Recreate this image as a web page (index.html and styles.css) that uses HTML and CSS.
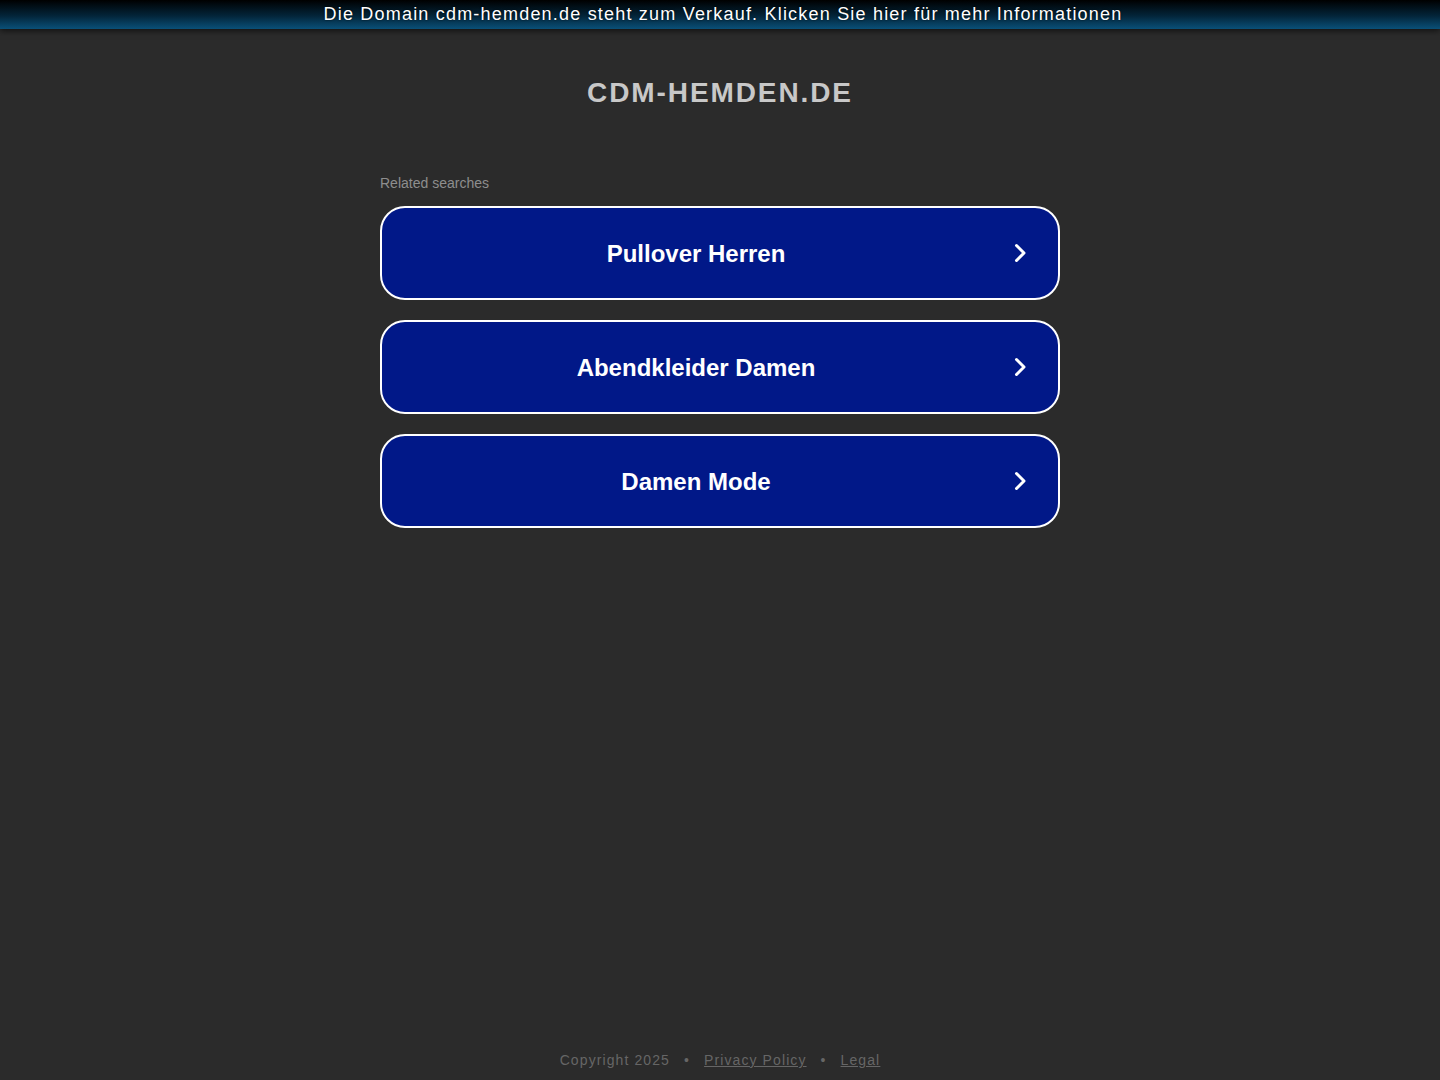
FILE: index.html
```html
<!DOCTYPE html>
<html lang="de">
<head>
<meta charset="utf-8">
<title>cdm-hemden.de</title>
<link rel="stylesheet" href="styles.css">
</head>
<body>
<div class="page">
  <header class="topbar"><a class="topbar-link" href="#">Die Domain cdm-hemden.de steht zum Verkauf. Klicken Sie hier für mehr Informationen</a></header>
  <main class="main">
    <h1 class="title">CDM-HEMDEN.DE</h1>
    <section class="related">
      <div class="related-label">Related searches</div>
      <a class="search-btn" href="#"><span class="search-text">Pullover Herren</span><svg class="chev" viewBox="0 0 24 24" width="24" height="24"><path d="M8.5 4.5 L16 12 L8.5 19.5" fill="none" stroke="#fff" stroke-width="3" stroke-linecap="round" stroke-linejoin="round"/></svg></a>
      <a class="search-btn" href="#"><span class="search-text">Abendkleider Damen</span><svg class="chev" viewBox="0 0 24 24" width="24" height="24"><path d="M8.5 4.5 L16 12 L8.5 19.5" fill="none" stroke="#fff" stroke-width="3" stroke-linecap="round" stroke-linejoin="round"/></svg></a>
      <a class="search-btn" href="#"><span class="search-text">Damen Mode</span><svg class="chev" viewBox="0 0 24 24" width="24" height="24"><path d="M8.5 4.5 L16 12 L8.5 19.5" fill="none" stroke="#fff" stroke-width="3" stroke-linecap="round" stroke-linejoin="round"/></svg></a>
    </section>
  </main>
  <footer class="footer">
    <span>Copyright 2025</span><span class="dot">•</span><a href="#">Privacy Policy</a><span class="dot">•</span><a href="#">Legal</a>
  </footer>
</div>
</body>
</html>
```

FILE: styles.css
```css
html, body {
  margin: 0;
  padding: 0;
  height: 100%;
}
body {
  background: #2b2b2b;
  font-family: "Liberation Sans", Arial, sans-serif;
}
.page {
  min-height: 100vh;
  display: flex;
  flex-direction: column;
}
.topbar {
  height: 29px;
  background: linear-gradient(to bottom, #000000 0%, #03253a 55%, #0a5078 100%);
  box-shadow: 0 2px 6px rgba(0,0,0,0.6);
  display: flex;
  justify-content: center;
  align-items: center;
  position: relative;
  z-index: 1;
}
.topbar-link {
  color: #ffffff;
  text-decoration: none;
  font-size: 18px;
  letter-spacing: 1.2px;
  line-height: 29px;
  margin-left: 6px;
  text-shadow: 0 0 2px rgba(0,0,0,0.8);
}
.main {
  flex: 1;
  display: flex;
  flex-direction: column;
  align-items: center;
}
.title {
  margin: 46px 0 0 0;
  font-size: 28px;
  line-height: 36px;
  font-weight: bold;
  color: #c8c8c8;
  letter-spacing: 1.9px;
}
.related {
  width: 680px;
  margin-top: 64px;
  display: flex;
  flex-direction: column;
  gap: 20px;
}
.related-label {
  font-size: 14px;
  color: #8e8e8e;
  line-height: 18px;
  margin-bottom: -6px;
  margin-top: -1px;
}
.search-btn {
  box-sizing: border-box;
  height: 94px;
  border: 2px solid #ffffff;
  border-radius: 25px;
  background: #011888;
  display: flex;
  align-items: center;
  text-decoration: none;
  padding: 0 26px 0 0;
}
.search-text {
  flex: 1;
  text-align: center;
  color: #ffffff;
  font-size: 24px;
  font-weight: bold;
  padding-left: 2px;
  padding-top: 2px;
}
.chev {
  flex: none;
}
.footer {
  height: 40px;
  display: flex;
  justify-content: center;
  align-items: center;
  font-size: 14px;
  letter-spacing: 1.1px;
  color: #666666;
}
.footer a {
  color: #666666;
}
.dot {
  margin: 0 14px;
}
```
